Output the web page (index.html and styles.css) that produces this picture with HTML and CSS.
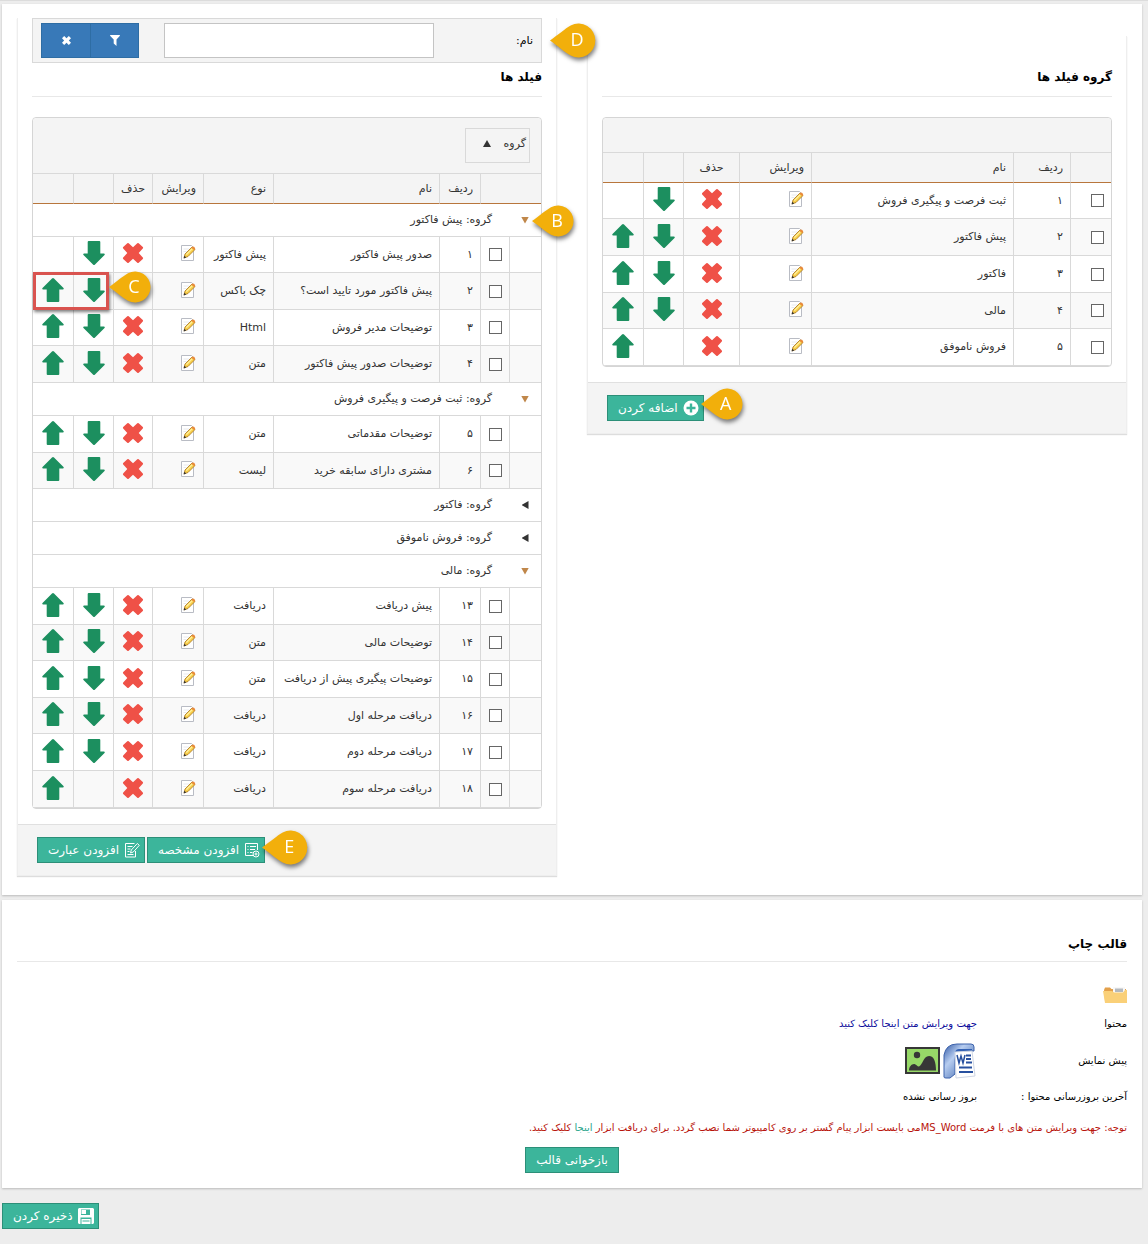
FILE: index.html
```html
<!DOCTYPE html>
<html lang="fa" dir="rtl">
<head>
<meta charset="utf-8">
<title>گروه فیلد ها</title>
<link rel="stylesheet" href="styles.css">
</head>
<body>
<svg class="sprite" aria-hidden="true">
  <symbol id="down" viewBox="0 0 22 24"><path fill="#1c8f5f" d="M5.700 0h10.600q1 0 1 1v11.500h3.500q1.500 0 .7 1.500L12 23.400q-1 1.100-2 0L.5 14q-.8-1.500.7-1.500h3.500V1q0-1 1-1z"/></symbol>
  <symbol id="up" viewBox="0 0 22 24"><path fill="#1c8f5f" d="M5.700 24h10.600q1 0 1-1V11.500h3.500q1.500 0 .7-1.500L12 .6q-1-1.100-2 0L.5 10q-.8 1.500.7 1.500h3.500V23q0 1 1 1z"/></symbol>
  <symbol id="remove" viewBox="0 0 22 22"><path fill="#ef5147" d="M5.300 1.200q.7-.6 1.400 0L11 5.300l4.300-4.100q.7-.6 1.400 0l4.100 3.900q.6.700 0 1.400L16.700 11l4.100 4.500q.6.700 0 1.400l-4.100 3.900q-.7.600-1.400 0L11 16.700l-4.300 4.100q-.7.600-1.400 0l-4.100-3.900q-.6-.7 0-1.400L5.300 11 1.200 6.500q-.6-.7 0-1.400z"/></symbol>
  <symbol id="edit" viewBox="0 0 16 16"><path d="M1.500.5h10l2 2v13h-12z" fill="#fff" stroke="#b9bcc4"/><path d="M3.500 4h6M3.500 6.500h3" stroke="#e8eaee"/><path d="M4 13l1-4 7-7 3 2.500-7 7z" fill="#f8cf4a" stroke="#a8731c" stroke-width=".8"/><path d="M5.800 9.200l6-6 1 .8-6 6z" fill="#fff0a0"/><path d="M11.300 2.700l1-1q1.500-.5 2.700 1.200l.2 1.200-1.100 1z" fill="#e98a3a"/><path d="M3.600 13.500l.8-2.700 1.800 1.700z" fill="#333"/></symbol>
  <symbol id="pin" viewBox="0 0 44 32"><path fill="#f2af0b" d="M0 16C7 11 14 5 19 2.200A15.500 15.500 0 1 1 19 29.800C14 27 7 21 0 16z"/></symbol>
</svg>

<main class="card designer">
  <section class="panel groups">
    <h2>گروه فیلد ها</h2>
    <div class="grid">
      <div class="toolbar"></div>
      <table>
        <colgroup><col class="w41"><col class="w57"><col><col class="w72"><col class="w56"><col class="w40"><col class="w40"></colgroup>
        <thead><tr><th></th><th>ردیف</th><th>نام</th><th>ویرایش</th><th class="mid">حذف</th><th></th><th></th></tr></thead>
        <tbody>
          <tr><td><input type="checkbox" aria-label="انتخاب ۱"></td><td>۱</td><td>ثبت فرصت و پیگیری فروش</td><td><button class="ico" aria-label="ویرایش"><svg class="edit"><use href="#edit"/></svg></button></td><td class="mid"><button class="ico" aria-label="حذف"><svg class="remove"><use href="#remove"/></svg></button></td><td class="mid"><button class="ico" aria-label="پایین"><svg class="arrow"><use href="#down"/></svg></button></td><td></td></tr>
          <tr class="tall"><td><input type="checkbox" aria-label="انتخاب ۲"></td><td>۲</td><td>پیش فاکتور</td><td><button class="ico" aria-label="ویرایش"><svg class="edit"><use href="#edit"/></svg></button></td><td class="mid"><button class="ico" aria-label="حذف"><svg class="remove"><use href="#remove"/></svg></button></td><td class="mid"><button class="ico" aria-label="پایین"><svg class="arrow"><use href="#down"/></svg></button></td><td class="mid"><button class="ico" aria-label="بالا"><svg class="arrow"><use href="#up"/></svg></button></td></tr>
          <tr class="tall"><td><input type="checkbox" aria-label="انتخاب ۳"></td><td>۳</td><td>فاکتور</td><td><button class="ico" aria-label="ویرایش"><svg class="edit"><use href="#edit"/></svg></button></td><td class="mid"><button class="ico" aria-label="حذف"><svg class="remove"><use href="#remove"/></svg></button></td><td class="mid"><button class="ico" aria-label="پایین"><svg class="arrow"><use href="#down"/></svg></button></td><td class="mid"><button class="ico" aria-label="بالا"><svg class="arrow"><use href="#up"/></svg></button></td></tr>
          <tr><td><input type="checkbox" aria-label="انتخاب ۴"></td><td>۴</td><td>مالی</td><td><button class="ico" aria-label="ویرایش"><svg class="edit"><use href="#edit"/></svg></button></td><td class="mid"><button class="ico" aria-label="حذف"><svg class="remove"><use href="#remove"/></svg></button></td><td class="mid"><button class="ico" aria-label="پایین"><svg class="arrow"><use href="#down"/></svg></button></td><td class="mid"><button class="ico" aria-label="بالا"><svg class="arrow"><use href="#up"/></svg></button></td></tr>
          <tr class="tall"><td><input type="checkbox" aria-label="انتخاب ۵"></td><td>۵</td><td>فروش ناموفق</td><td><button class="ico" aria-label="ویرایش"><svg class="edit"><use href="#edit"/></svg></button></td><td class="mid"><button class="ico" aria-label="حذف"><svg class="remove"><use href="#remove"/></svg></button></td><td></td><td class="mid"><button class="ico" aria-label="بالا"><svg class="arrow"><use href="#up"/></svg></button></td></tr>
        </tbody>
      </table>
    </div>
    <footer>
      <div class="anchor">
        <button class="btn"><svg width="16" height="16" viewBox="0 0 16 16"><circle cx="8" cy="8" r="7.500" fill="#fff"/><path d="M8 3.500v9M3.500 8h9" stroke="#3cb59b" stroke-width="2.400"/></svg>اضافه کردن</button>
        <span class="callout at-button"><svg><use href="#pin"/></svg><b>A</b></span>
      </div>
    </footer>
  </section>

  <section class="panel fields">
    <form class="filter">
      <label for="name">نام:</label>
      <input id="name" type="text">
      <div class="pair">
        <button type="button" aria-label="فیلتر"><svg width="10" height="11" viewBox="0 0 10 11"><path fill="#fff" d="M.3 0h9.400q.5.400 0 1L6.500 4.600V11L3.700 8.500V4.600L.3 1q-.5-.6 0-1z"/></svg></button>
        <button type="button" aria-label="پاک کردن"><svg width="9" height="9" viewBox="0 0 22 22"><path fill="#fff" d="M5.300 0L11 5.300 16.700 0 22 5.300 16.700 11l5.300 5.700-5.300 5.300L11 16.700 5.300 22 0 16.700 5.300 11 0 5.300z"/></svg></button>
      </div>
      <span class="callout large at-filter"><svg><use href="#pin"/></svg><b>D</b></span>
    </form>
    <h2>فیلد ها</h2>
    <div class="grid">
      <div class="toolbar"><button class="chip">گروه <i class="caret sort"></i></button></div>
      <table>
        <colgroup><col class="w32"><col class="w29"><col class="w41"><col><col class="w70"><col class="w51"><col class="w39"><col class="w40"><col class="w40"></colgroup>
        <thead><tr><th colspan="2"></th><th>ردیف</th><th>نام</th><th>نوع</th><th>ویرایش</th><th class="mid">حذف</th><th></th><th></th></tr></thead>
        <tbody>
          <tr class="group"><td class="mid"><div class="anchor"><button class="ico" aria-label="بستن"><i class="caret open"></i></button><span class="callout at-caret"><svg><use href="#pin"/></svg><b>B</b></span></div></td><td colspan="8">گروه: پیش فاکتور</td></tr>
        </tbody>
        <tbody>
          <tr><td></td><td class="mid"><input type="checkbox" aria-label="انتخاب ۱"></td><td>۱</td><td>صدور پیش فاکتور</td><td>پیش فاکتور</td><td><button class="ico" aria-label="ویرایش"><svg class="edit"><use href="#edit"/></svg></button></td><td class="mid"><button class="ico" aria-label="حذف"><svg class="remove"><use href="#remove"/></svg></button></td><td class="mid"><button class="ico" aria-label="پایین"><svg class="arrow"><use href="#down"/></svg></button></td><td></td></tr>
          <tr class="tall"><td></td><td class="mid"><input type="checkbox" aria-label="انتخاب ۲"></td><td>۲</td><td>پیش فاکتور مورد تایید است؟</td><td>چک باکس</td><td><button class="ico" aria-label="ویرایش"><svg class="edit"><use href="#edit"/></svg></button></td><td class="mid"></td><td class="mid"><button class="ico" aria-label="پایین"><svg class="arrow"><use href="#down"/></svg></button></td><td class="mid marked"><button class="ico" aria-label="بالا"><svg class="arrow"><use href="#up"/></svg></button><span class="frame"></span><span class="callout at-frame"><svg><use href="#pin"/></svg><b>C</b></span></td></tr>
          <tr><td></td><td class="mid"><input type="checkbox" aria-label="انتخاب ۳"></td><td>۳</td><td>توضیحات مدیر فروش</td><td>Html</td><td><button class="ico" aria-label="ویرایش"><svg class="edit"><use href="#edit"/></svg></button></td><td class="mid"><button class="ico" aria-label="حذف"><svg class="remove"><use href="#remove"/></svg></button></td><td class="mid"><button class="ico" aria-label="پایین"><svg class="arrow"><use href="#down"/></svg></button></td><td class="mid"><button class="ico" aria-label="بالا"><svg class="arrow"><use href="#up"/></svg></button></td></tr>
          <tr class="tall"><td></td><td class="mid"><input type="checkbox" aria-label="انتخاب ۴"></td><td>۴</td><td>توضیحات صدور پیش فاکتور</td><td>متن</td><td><button class="ico" aria-label="ویرایش"><svg class="edit"><use href="#edit"/></svg></button></td><td class="mid"><button class="ico" aria-label="حذف"><svg class="remove"><use href="#remove"/></svg></button></td><td class="mid"><button class="ico" aria-label="پایین"><svg class="arrow"><use href="#down"/></svg></button></td><td class="mid"><button class="ico" aria-label="بالا"><svg class="arrow"><use href="#up"/></svg></button></td></tr>
        </tbody>
        <tbody>
          <tr class="group"><td class="mid"><button class="ico" aria-label="بستن"><i class="caret open"></i></button></td><td colspan="8">گروه: ثبت فرصت و پیگیری فروش</td></tr>
        </tbody>
        <tbody>
          <tr class="tall"><td></td><td class="mid"><input type="checkbox" aria-label="انتخاب ۵"></td><td>۵</td><td>توضیحات مقدماتی</td><td>متن</td><td><button class="ico" aria-label="ویرایش"><svg class="edit"><use href="#edit"/></svg></button></td><td class="mid"><button class="ico" aria-label="حذف"><svg class="remove"><use href="#remove"/></svg></button></td><td class="mid"><button class="ico" aria-label="پایین"><svg class="arrow"><use href="#down"/></svg></button></td><td class="mid"><button class="ico" aria-label="بالا"><svg class="arrow"><use href="#up"/></svg></button></td></tr>
          <tr><td></td><td class="mid"><input type="checkbox" aria-label="انتخاب ۶"></td><td>۶</td><td>مشتری دارای سابقه خرید</td><td>لیست</td><td><button class="ico" aria-label="ویرایش"><svg class="edit"><use href="#edit"/></svg></button></td><td class="mid"><button class="ico" aria-label="حذف"><svg class="remove"><use href="#remove"/></svg></button></td><td class="mid"><button class="ico" aria-label="پایین"><svg class="arrow"><use href="#down"/></svg></button></td><td class="mid"><button class="ico" aria-label="بالا"><svg class="arrow"><use href="#up"/></svg></button></td></tr>
        </tbody>
        <tbody>
          <tr class="group"><td class="mid"><button class="ico" aria-label="باز کردن"><i class="caret closed"></i></button></td><td colspan="8">گروه: فاکتور</td></tr>
          <tr class="group"><td class="mid"><button class="ico" aria-label="باز کردن"><i class="caret closed"></i></button></td><td colspan="8">گروه: فروش ناموفق</td></tr>
          <tr class="group"><td class="mid"><button class="ico" aria-label="بستن"><i class="caret open"></i></button></td><td colspan="8">گروه: مالی</td></tr>
        </tbody>
        <tbody>
          <tr class="tall"><td></td><td class="mid"><input type="checkbox" aria-label="انتخاب ۱۳"></td><td>۱۳</td><td>پیش دریافت</td><td>دریافت</td><td><button class="ico" aria-label="ویرایش"><svg class="edit"><use href="#edit"/></svg></button></td><td class="mid"><button class="ico" aria-label="حذف"><svg class="remove"><use href="#remove"/></svg></button></td><td class="mid"><button class="ico" aria-label="پایین"><svg class="arrow"><use href="#down"/></svg></button></td><td class="mid"><button class="ico" aria-label="بالا"><svg class="arrow"><use href="#up"/></svg></button></td></tr>
          <tr><td></td><td class="mid"><input type="checkbox" aria-label="انتخاب ۱۴"></td><td>۱۴</td><td>توضیحات مالی</td><td>متن</td><td><button class="ico" aria-label="ویرایش"><svg class="edit"><use href="#edit"/></svg></button></td><td class="mid"><button class="ico" aria-label="حذف"><svg class="remove"><use href="#remove"/></svg></button></td><td class="mid"><button class="ico" aria-label="پایین"><svg class="arrow"><use href="#down"/></svg></button></td><td class="mid"><button class="ico" aria-label="بالا"><svg class="arrow"><use href="#up"/></svg></button></td></tr>
          <tr class="tall"><td></td><td class="mid"><input type="checkbox" aria-label="انتخاب ۱۵"></td><td>۱۵</td><td>توضیحات پیگیری پیش از دریافت</td><td>متن</td><td><button class="ico" aria-label="ویرایش"><svg class="edit"><use href="#edit"/></svg></button></td><td class="mid"><button class="ico" aria-label="حذف"><svg class="remove"><use href="#remove"/></svg></button></td><td class="mid"><button class="ico" aria-label="پایین"><svg class="arrow"><use href="#down"/></svg></button></td><td class="mid"><button class="ico" aria-label="بالا"><svg class="arrow"><use href="#up"/></svg></button></td></tr>
          <tr><td></td><td class="mid"><input type="checkbox" aria-label="انتخاب ۱۶"></td><td>۱۶</td><td>دریافت مرحله اول</td><td>دریافت</td><td><button class="ico" aria-label="ویرایش"><svg class="edit"><use href="#edit"/></svg></button></td><td class="mid"><button class="ico" aria-label="حذف"><svg class="remove"><use href="#remove"/></svg></button></td><td class="mid"><button class="ico" aria-label="پایین"><svg class="arrow"><use href="#down"/></svg></button></td><td class="mid"><button class="ico" aria-label="بالا"><svg class="arrow"><use href="#up"/></svg></button></td></tr>
          <tr class="tall"><td></td><td class="mid"><input type="checkbox" aria-label="انتخاب ۱۷"></td><td>۱۷</td><td>دریافت مرحله دوم</td><td>دریافت</td><td><button class="ico" aria-label="ویرایش"><svg class="edit"><use href="#edit"/></svg></button></td><td class="mid"><button class="ico" aria-label="حذف"><svg class="remove"><use href="#remove"/></svg></button></td><td class="mid"><button class="ico" aria-label="پایین"><svg class="arrow"><use href="#down"/></svg></button></td><td class="mid"><button class="ico" aria-label="بالا"><svg class="arrow"><use href="#up"/></svg></button></td></tr>
          <tr class="tall"><td></td><td class="mid"><input type="checkbox" aria-label="انتخاب ۱۸"></td><td>۱۸</td><td>دریافت مرحله سوم</td><td>دریافت</td><td><button class="ico" aria-label="ویرایش"><svg class="edit"><use href="#edit"/></svg></button></td><td class="mid"><button class="ico" aria-label="حذف"><svg class="remove"><use href="#remove"/></svg></button></td><td></td><td class="mid"><button class="ico" aria-label="بالا"><svg class="arrow"><use href="#up"/></svg></button></td></tr>
        </tbody>
      </table>
    </div>
    <footer>
      <div class="anchor">
        <button class="btn"><svg width="16" height="16" viewBox="0 0 16 16" fill="none" stroke="#fff"><path d="M9 13.500H1.500v-12h12V8M3.500 4.500h1M6 4.500h6M3.500 7.500h1M6 7.500h5M3.500 10.500h1M6 10.500h2.500"/><circle cx="12" cy="12" r="3"/><path d="M12 10.500v3M10.500 12h3"/></svg>افزودن مشخصه</button>
        <span class="callout large at-button"><svg><use href="#pin"/></svg><b>E</b></span>
      </div>
      <button class="btn"><svg width="16" height="16" viewBox="0 0 16 16" fill="none" stroke="#fff"><path d="M11.500 9v6H1.500V1.500h9M3.500 4.500h5M3.500 7h3M3.500 9.500h2M3.500 12.500h6M6.500 11l.8-3 6-6.500 2 1.800-6 6.700z"/></svg>افزودن عبارت</button>
    </footer>
  </section>
</main>

<section class="card print">
  <h2>قالب چاپ</h2>
  <svg class="folder" width="24" height="18" viewBox="0 0 24 18"><path d="M1 4l1-2.500h5L8.500 3H23v12H2z" fill="#e3a04a"/><path d="M10 1h12v6H10z" fill="#f8f8f8"/><path d="M12 2.500h8V6h-8z" fill="#b4b9be"/><path d="M0 5h9l2 1.500h9L22 4h2v13H2z" fill="#fad078"/></svg>
  <dl>
    <dt>محتوا</dt><dd><a href="#">جهت ویرایش متن اینجا کلیک کنید</a></dd>
    <dt>پیش نمایش</dt>
    <dd class="previews">
      <svg width="34" height="36" viewBox="0 0 34 36"><defs><linearGradient id="wd" x2="1" y2="1"><stop stop-color="#2f57a4"/><stop offset=".35" stop-color="#b7cdf0"/><stop offset="1" stop-color="#2350a0"/></linearGradient></defs><path d="M1 34V12Q3 1 14 1h14q3 0 3 3v4H19q-7 0-7 9v14l-5 4H3q-2 0-2-1z" fill="url(#wd)" stroke="#3c62ab"/><path d="M12 9q1-3 4-3h13v3z" fill="#3261b4"/><path d="M12 9l17-1 3 25-19 2z" fill="#fff" stroke="#cfd6e4"/><path d="M14 12l2 8 2-7 2 7 2-8" fill="none" stroke="#27509f" stroke-width="1.500"/><path d="M23 12.500h5M23 16h5M23 19.500h6M16 24.500h13M16 29h14" stroke="#27509f" stroke-width="2"/></svg>
      <svg width="35" height="27" viewBox="0 0 35 27"><path d="M0 0h35v27H0z" fill="#373737"/><path d="M2 2h31v23H2z" fill="#97d968"/><path d="M4 23.500c0-4 3-7 5.500-6.500 2.500 1 3 3 4.500 2.500 4-2 4-10 10-10.500 5 0 7 6 7 14.500z" fill="#373737"/><circle cx="12" cy="8" r="3.200" fill="#373737"/></svg>
    </dd>
    <dt>آخرین بروزرسانی محتوا :</dt><dd>بروز رسانی نشده</dd>
  </dl>
  <p>توجه: جهت ویرایش متن های با فرمت <bdi>MS_Word</bdi>می بایست ابزار پیام گستر بر روی کامپیوتر شما نصب گردد. برای دریافت ابزار <a href="#">اینجا</a> کلیک کنید.</p>
  <button class="btn plain">بازخوانی قالب</button>
</section>

<div class="save">
  <button class="btn"><svg width="16" height="16" viewBox="0 0 16 16"><path fill="#fff" d="M1 0h14l1 1v14l-1 1H1l-1-1V1z"/><path fill="#3cb59b" d="M3 1.500h9V7H3zM2.500 9.500h11V16h-1V11h-9v5h-1z"/><path fill="#fff" d="M3.500 2H8v4H3.500z"/><path stroke="#3cb59b" d="M4.500 13h7"/></svg>ذخیره کردن</button>
</div>
</body>
</html>
```

FILE: styles.css
```css
* { box-sizing: border-box; }
html { background: #fff; }
body {
  margin: 0;
  padding: 3px 6px 15px 2px;
  background: #ededed;
  border-top: 1px solid #dcdcdc;
  color: #333;
  font: 11px/16px "DejaVu Sans", sans-serif;
}
button, input { font: inherit; color: inherit; }
button { padding: 0; border: 0; background: none; cursor: pointer; }
svg { display: block; }
a { text-decoration: none; }
.sprite { position: absolute; width: 0; height: 0; }

.card { background: #fff; box-shadow: 0 1px 2px #bbb; }
h2 {
  margin: 0;
  border-bottom: 1px solid #e8e8e8;
  color: #000;
  font-size: 12px;
  line-height: 20px;
  font-weight: bold;
}

.designer {
  display: grid;
  grid-template-columns: 1fr 1fr;
  gap: 30px;
  align-items: start;
  padding: 14px 15px 19px;
}
.panel {
  padding: 0 14px;
  border: 1px solid #eee;
  border-top: 0;
  box-shadow: 0 1px 1px #ddd;
}
.panel h2 { height: 34px; padding-top: 4px; }
.groups { margin-top: 18px; padding-top: 27px; }

.filter {
  position: relative;
  display: flex;
  align-items: center;
  height: 45px;
  padding: 4px 8px;
  border: 1px solid #d9d9d9;
  background: #f4f4f4;
}
.filter label { color: #000; width: 99px; }
.filter input { width: 270px; height: 35px; border: 1px solid #c4c4c4; background: #fff; }
.pair { display: flex; margin-right: auto; }
.pair button {
  display: grid;
  place-items: center;
  width: 49px;
  height: 35px;
  border: 1px solid #2e6da4;
  background: #3879b8;
}
.pair button + button { border-right: 0; }

.grid {
  margin: 20px 0 15px;
  border: 1px solid #d5d5d5;
  border-radius: 4px;
  overflow: hidden;
}
.fields .grid { overflow: visible; }
.toolbar { display: flex; height: 34px; background: #f4f4f4; border-radius: 4px 4px 0 0; }
.fields .toolbar { height: 55px; padding: 10px 11px; }
.chip {
  display: flex;
  justify-content: space-between;
  align-items: center;
  width: 65px;
  height: 35px;
  padding: 0 3px 4px 17px;
  border: 1px solid #d9d9d9;
}

table { width: 100%; table-layout: fixed; border-collapse: separate; border-spacing: 0; }
.w29 { width: 29px; } .w32 { width: 32px; } .w39 { width: 39px; } .w40 { width: 40px; }
.w41 { width: 41px; } .w51 { width: 51px; } .w56 { width: 56px; } .w57 { width: 57px; }
.w70 { width: 70px; } .w72 { width: 72px; }
th, td {
  padding: 0 7px;
  border-left: 1px solid #d9d9d9;
  border-bottom: 1px solid #d9d9d9;
  text-align: right;
  font-weight: normal;
  white-space: nowrap;
}
th:last-child, td:last-child { border-left: 0; }
th { height: 31px; border-top: 1px solid #d9d9d9; border-bottom-color: #b8763c; background: #f4f4f4; }
td { height: 36px; }
.tall td { height: 37px; }
tbody tr:nth-child(even) { background: #f9f9f9; }
tbody tr.group { background: #fff; }
.group td { height: 33px; border-left: 0; }
.group td + td { padding-right: 17px; }
.mid { padding: 0; text-align: center; }
td .ico { display: inline-block; padding-bottom: 3px; vertical-align: middle; }
.group .ico { padding: 0; }
.arrow { width: 22px; height: 24px; }
.remove { width: 22px; height: 22px; }
.edit { width: 16px; height: 16px; }
input[type="checkbox"] {
  appearance: none;
  display: inline-block;
  width: 13px;
  height: 13px;
  margin: 0;
  border: 1px solid #666;
  background: #fff;
  vertical-align: middle;
}

.caret { display: block; width: 8px; height: 7px; background: #333; }
.sort { clip-path: polygon(50% 0, 100% 100%, 0 100%); }
.open { background: #c0874a; clip-path: polygon(0 0, 100% 0, 50% 100%); }
.closed { width: 7px; height: 8px; clip-path: polygon(100% 0, 100% 100%, 0 50%); }

.panel footer {
  display: flex;
  justify-content: flex-end;
  gap: 2px;
  margin: 0 -14px;
  padding: 12px 19px;
  border-top: 1px solid #e0e0e0;
  background: #f4f4f4;
}
.btn {
  display: flex;
  align-items: center;
  gap: 5px;
  height: 26px;
  padding: 0 4px 0 10px;
  border: 1px solid #2c8f78;
  background: #3cb59b;
  color: #fff;
  font-size: 12px;
  white-space: nowrap;
}
.plain { padding: 0 10px; margin: 0 auto; }

/* Lettered markers lying over the controls they explain */
.anchor { position: relative; }
.callout {
  position: absolute;
  z-index: 2;
  width: 44px;
  height: 32px;
  filter: drop-shadow(1px 3px 2px rgba(0, 0, 0, .5));
}
.callout svg { width: 100%; height: 100%; }
.callout b {
  position: absolute;
  inset: 0 7px 0 auto;
  width: 24px;
  direction: ltr;
  color: #fff;
  font: 18px/30px "Open Sans", sans-serif;
  text-align: center;
}
.large { width: 48px; height: 35px; }
.large b { line-height: 33px; right: 9px; }
.at-button { left: calc(100% - 3px); top: -7px; }
.at-filter { left: calc(100% + 9px); top: 4px; }
.at-caret { left: calc(50% + 7px); top: -7px; }
.marked { position: relative; }
.frame {
  position: absolute;
  left: 0;
  top: -1px;
  width: 76px;
  height: 38px;
  border: 3px solid #d9534f;
  box-shadow: 1px 2px 3px rgba(0, 0, 0, .5);
}
.at-frame { left: 76px; top: -2px; }

.print { margin-top: 5px; padding: 34px 15px 15px; }
.print h2 { height: 28px; }
.folder { margin: 24px 0 0; }
dl {
  display: grid;
  grid-template-columns: 150px 1fr;
  grid-template-rows: 37px 37px 36px;
  align-items: center;
  margin: 1px 0 0;
  color: #000;
  font-size: 10px;
}
dd { margin: 0; }
dd a { color: #0c0c9c; }
.previews { display: flex; align-items: center; gap: 3px; }
.print p { margin: 5px 0 11px; color: #b8140c; font-size: 10px; }
.print p a { color: #2aa58c; }
.save { display: flex; justify-content: flex-end; margin-top: 15px; }
```
